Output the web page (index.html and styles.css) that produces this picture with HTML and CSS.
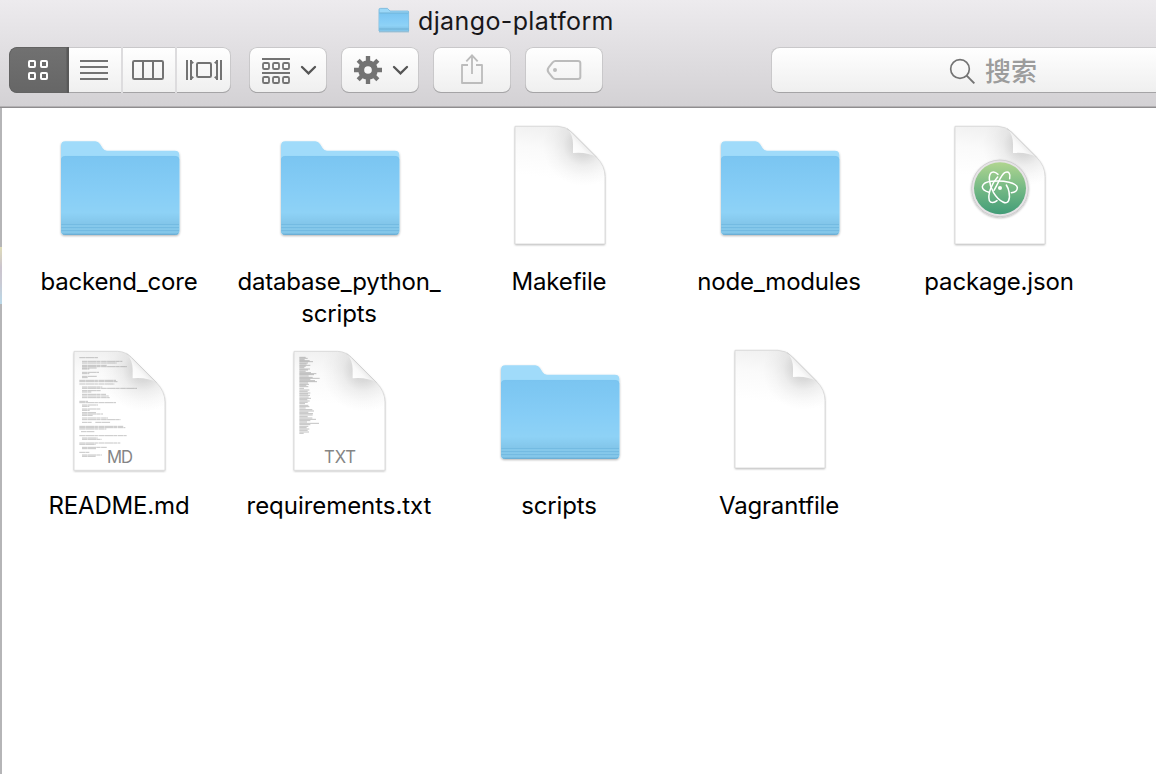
FILE: index.html
```html
<!DOCTYPE html>
<html lang="zh-CN">
<head>
<meta charset="utf-8">
<title>django-platform</title>
<link rel="stylesheet" href="styles.css">
</head>
<body>
<svg class="defs" width="0" height="0" aria-hidden="true">
  <defs>
    <linearGradient id="front" x1="0" y1="0" x2="0" y2="1">
      <stop offset="0" stop-color="#7ac5f1"/><stop offset=".45" stop-color="#86cdf6"/><stop offset=".72" stop-color="#8ed2f6"/><stop offset=".87" stop-color="#82c5e9"/><stop offset="1" stop-color="#7fc2e6"/>
    </linearGradient>
    <linearGradient id="paper" gradientUnits="userSpaceOnUse" x1="170" y1="35" x2="150" y2="190">
      <stop offset="0" stop-color="#f0f0f0"/><stop offset=".45" stop-color="#fafafa"/><stop offset="1" stop-color="#fff"/>
    </linearGradient>
    <radialGradient id="shade" gradientUnits="userSpaceOnUse" cx="250" cy="92" r="122">
      <stop offset="0" stop-color="#000" stop-opacity=".16"/><stop offset=".25" stop-color="#000" stop-opacity=".13"/><stop offset=".5" stop-color="#000" stop-opacity=".055"/><stop offset=".75" stop-color="#000" stop-opacity=".02"/><stop offset="1" stop-color="#000" stop-opacity="0"/>
    </radialGradient>
    <linearGradient id="curl" gradientUnits="userSpaceOnUse" x1="218" y1="114" x2="252" y2="82">
      <stop offset="0" stop-color="#fff"/><stop offset=".6" stop-color="#f9f9f9"/><stop offset="1" stop-color="#e8e8e8"/>
    </linearGradient>
    <linearGradient id="atom" x1="0" y1="0" x2="0" y2="1">
      <stop offset="0" stop-color="#b0d590"/><stop offset=".5" stop-color="#75b985"/><stop offset="1" stop-color="#429c78"/>
    </linearGradient>
    <filter id="drop" x="-10%" y="-10%" width="120%" height="125%"><feDropShadow dx="0" dy="3" stdDeviation="3" flood-color="#000" flood-opacity=".3"/></filter>
    <symbol id="folder" viewBox="78 3 384 384">
      <g filter="url(#drop)">
        <path fill="#a0dbfa" d="M93 77Q93 64 106 64H196Q205 64 210 72L218 85Q222 92 231 92H435Q448 92 448 105V333Q448 344 437 344H104Q93 344 93 333Z"/>
        <path fill="url(#front)" d="M93 120Q93 108 106 108H435Q448 108 448 120V333Q448 344 437 344H104Q93 344 93 333Z"/>
      </g>
      <path fill="none" stroke="#6bb4dd" stroke-width="2" d="M94 314H447M94 323H447M94 332H447"/>
      <path fill="none" stroke="#92d1f2" stroke-width="2" d="M94 318H447M94 327H447M94 336H447"/>
      <path fill="none" stroke="#5fa5cc" stroke-width="2.500" d="M98 342Q101 343 104 343H437Q441 343 444 341"/>
      <path fill="none" stroke="#78c1eb" stroke-width="1" d="M94 120Q94 109 106 109H435Q447 109 447 120"/>
    </symbol>
    <symbol id="sheet" viewBox="-12 18 384 384">
      <path fill="url(#paper)" filter="url(#drop)" d="M45 34H174Q197 34 215 52L290 127Q315 153 315 184V387H45Z"/>
      <path fill="url(#shade)" d="M45 34H174Q197 34 215 52L290 127Q315 153 315 184V387H45Z"/>
      <path fill="none" stroke="#d6d6d6" stroke-width="2.500" d="M45 34H174Q197 34 215 52L290 127Q315 153 315 184V387H45Z"/>
      <path fill="url(#curl)" d="M201 40Q219 60 219 87V114Q262 110 290 127L215 52Q208 44 201 40Z"/>
      <path fill="none" stroke="#c6c6c6" stroke-width="2" d="M201 40L215 52L290 127"/>
    </symbol>
  </defs>
</svg>

<header class="chrome">
  <div class="title">
    <svg class="title-icon" viewBox="0 0 34 28">
      <path fill="#6ba9c9" opacity=".5" d="M2 24h30v2.500H2z"/>
      <path fill="#9bd8f8" stroke="#71b5da" stroke-width=".8" d="M2 3.500Q2 2.400 3.200 2.400H10.500L13 5H31Q31.600 5 31.600 6V25H2Z"/>
      <path fill="url(#front)" d="M2.300 7H31.300V24.600H2.300Z"/>
      <path stroke="#70b3d7" stroke-width="1" d="M2.300 7H31.300M2 23H32"/>
    </svg>
    <h1 class="title-text">django-platform</h1>
  </div>
  <div class="toolbar">
    <div class="views">
      <button class="view view-on" aria-label="Icons"><svg viewBox="27 33 180 138" fill="none" stroke="#fff" stroke-width="6"><rect x="87" y="75" width="18" height="18" rx="3"/><rect x="123" y="75" width="18" height="18" rx="3"/><rect x="87" y="111" width="18" height="18" rx="3"/><rect x="123" y="111" width="18" height="18" rx="3"/></svg></button>
      <button class="view" aria-label="List"><svg viewBox="207 33 162 138" stroke="#737373" stroke-width="6"><path d="M240 75H324M240 93H324M240 111H324M240 129H324"/></svg></button>
      <button class="view" aria-label="Columns"><svg viewBox="369 33 162 138" fill="none" stroke="#737373" stroke-width="6"><rect x="399" y="75" width="90" height="54" rx="4"/><path d="M429 74V130M459 74V130"/></svg></button>
      <button class="view" aria-label="Gallery"><svg viewBox="531 33 162 138" fill="none" stroke="#737373" stroke-width="6"><path d="M561 72V132M663 72V132M573 72V132M651 72V132"/><path fill="#737373" stroke="none" d="M574 73L582 80L576 84ZM574 131L582 124L576 120ZM650 73L642 80L648 84ZM650 131L642 124L648 120Z"/><rect x="591" y="81" width="42" height="42" rx="4"/></svg></button>
    </div>
    <button class="tool" aria-label="Arrange"><svg viewBox="27 33 234 138" fill="none" stroke="#737373" stroke-width="5.500"><path d="M66 69H150M66 111H150"/><rect x="69" y="81" width="18" height="18" rx="4"/><rect x="99" y="81" width="18" height="18" rx="4"/><rect x="129" y="81" width="18" height="18" rx="4"/><rect x="69" y="123" width="18" height="18" rx="4"/><rect x="99" y="123" width="18" height="18" rx="4"/><rect x="129" y="123" width="18" height="18" rx="4"/><path stroke="#555" stroke-width="7" stroke-linecap="round" d="M186 93L205.500 112L225 93"/></svg></button>
    <button class="tool" aria-label="Actions"><svg viewBox="303 33 234 138" fill="none" stroke="#737373"><circle cx="384" cy="102" r="20.500" stroke-width="18"/><path stroke-width="13" d="M384 60V80M384 124V144M342 102H362M406 102H426M354.500 72.500L368 86M400 118L413.500 131.500M413.500 72.500L400 86M368 118L354.500 131.500"/><path stroke="#555" stroke-width="7" stroke-linecap="round" d="M462 93L481.500 112L501 93"/></svg></button>
    <button class="tool" aria-label="Share"><svg viewBox="24 33 234 138" fill="none" stroke="#bcbcbc" stroke-width="5.500"><path stroke-linejoin="round" d="M129 87H111V141H171V87H153"/><path d="M141 58V114M124 76L141 58L158 76"/></svg></button>
    <button class="tool" aria-label="Tags"><svg viewBox="300 33 234 138" fill="none" stroke="#bcbcbc" stroke-width="6"><path stroke-linejoin="round" d="M391 75H459Q466 75 466 81V123Q466 129 459 129H391Q387 129 383 125L371 110Q365 102 371 94L383 79Q387 75 391 75Z"/><circle cx="390" cy="102" r="6" fill="#bcbcbc" stroke="none"/></svg></button>
    <div class="search">
      <svg class="search-icon" viewBox="567 66 81 81" fill="none" stroke="#737373" stroke-width="5"><circle cx="600" cy="99" r="28"/><path stroke-width="6" d="M620 119L643 142"/></svg>
      <span class="search-text">搜索</span>
    </div>
  </div>
</header>

<main class="files">
  <div class="file"><svg class="icon"><use href="#folder"/></svg><span class="name">backend_core</span></div>
  <div class="file"><svg class="icon"><use href="#folder"/></svg><span class="name">database_python_<br>scripts</span></div>
  <div class="file"><svg class="icon"><use href="#sheet"/></svg><span class="name">Makefile</span></div>
  <div class="file"><svg class="icon"><use href="#folder"/></svg><span class="name">node_modules</span></div>
  <div class="file">
    <svg class="icon" viewBox="-12 18 384 384">
      <use href="#sheet" x="-12" y="18" width="384" height="384"/>
      <circle cx="180" cy="220" r="85" fill="#e6e3e6" stroke="#c4c2c4" stroke-width="2" filter="url(#drop)"/>
      <circle cx="180" cy="220" r="78" fill="url(#atom)"/>
      <g fill="none" stroke="#fff" stroke-width="4.500" stroke-linecap="round">
        <path d="M147 232C117 222 122 203 155 199C193 195 230 204 232 218C232 228 223 232 214 233"/>
        <path d="M174 178C160 165 147 171 148 193C150 220 166 249 189 261C206 270 211 251 207 231Q205 219 199 210"/>
        <path d="M162 226C178 200 181 182 194 173C207 167 212 177 209 191"/>
        <path d="M173 186C153 207 143 239 148 257C153 266 163 263 171 257"/>
      </g>
      <circle cx="180" cy="219" r="6" fill="#fff"/>
    </svg>
    <span class="name">package.json</span>
  </div>
  <div class="file">
    <svg class="icon" viewBox="-12 15 384 384">
      <use href="#sheet" x="-16.500" y="18" width="390" height="388"/>
      <g fill="none" stroke="#777" stroke-width="1.800" opacity=".7">
        <path stroke-dasharray="17 1 26 .8 11 1.500" d="M58 53H114M66 64H187M66 69H170M66 76H140M66 80H201M66 84H110M66 87H88M66 97H117M66 101H88M66 109H111M66 113H84M58 121H168M58 125H174M58 132H163M66 141H127M66 145H231M66 152H122M66 156H94M66 163H138M66 168H146M66 173H149M58 184H84M58 188H168M66 195H114M66 199H88M66 207H121M66 211H89M66 218H108M66 222H129M66 226H98M66 234H144M66 239H182M66 247H95M106 247H151M58 259H190M58 263H196M58 267H139M63 275H103M58 287H200M66 294H113M66 298H125M58 309H181M58 313H107M66 322H141M66 326H108M58 337H88M66 345H126M66 349H107"/>
      </g>
      <text class="kind" x="180" y="369" text-anchor="middle" textLength="78">MD</text>
    </svg>
    <span class="name">README.md</span>
  </div>
  <div class="file">
    <svg class="icon" viewBox="-12 15 384 384">
      <use href="#sheet" x="-16.500" y="18" width="390" height="388"/>
      <g fill="none" stroke="#777" stroke-width="1.800" opacity=".75">
        <path d="M58 52H77M58 55H83M58 59H74M58 62H89M58 65H99M58 69H84M58 72H80M58 76H91M58 79H77M58 83H73M58 87H90M58 90H84M58 94H77M58 98H93M58 101H109M58 104H102M58 108H86M58 112H98M58 115H119M58 118H91M58 122H105M58 125H111M58 129H84M58 133H87M58 136H79M58 140H85M58 145H72M58 150H88M58 154H83M58 159H91M58 162H84M58 166H90M58 171H86M58 175H93M58 179H82M58 183H89M58 187H83M58 191H75M58 196H85M58 200H88M58 204H77M58 209H97M58 213H102M58 217H85M58 221H99M58 225H98M58 230H83M58 234H97M58 238H108M58 242H91M58 246H81M58 250H117M58 254H91M58 259H85M58 263H80M58 267H88M58 271H83M58 276H87M58 280H71"/>
      </g>
      <text class="kind" x="180" y="369" text-anchor="middle" textLength="96">TXT</text>
    </svg>
    <span class="name name-wide">requirements.txt</span>
  </div>
  <div class="file"><svg class="icon"><use href="#folder"/></svg><span class="name">scripts</span></div>
  <div class="file"><svg class="icon"><use href="#sheet"/></svg><span class="name">Vagrantfile</span></div>
</main>
</body>
</html>
```
FILE: styles.css
```css
* { box-sizing: border-box; }
html, body { height: 100%; }
body {
  margin: 0;
  display: flex;
  flex-direction: column;
  overflow: hidden;
  background: #fff;
  font-family: Inter, "Noto Sans CJK SC", sans-serif;
  font-variant-ligatures: none;
  color: #000;
}
.defs { position: absolute; }
.chrome {
  flex: none;
  height: 108px;
  background: linear-gradient(#edebee, #d3d1d4);
  border-bottom: 1px solid #8f8d8f;
  box-shadow: inset 0 -1px #b3b1b3;
}
.title { display: flex; align-items: center; height: 42px; padding-left: 377px; }
.title-icon { width: 34px; height: 28px; margin-top: -2px; }
.title-text { margin: 0 0 0 7px; font-size: 25px; line-height: 32px; font-weight: 400; color: #18171a; white-space: nowrap; letter-spacing: .38px; }
.toolbar { display: flex; padding: 5px 0 0 9px; gap: 14px; }
button { border: 0; padding: 0; margin: 0; display: block; font: inherit; }
button svg { display: block; width: 100%; height: 46px; }
.views, .tool, .search {
  flex: none;
  height: 46px;
  border-radius: 8px;
  background: linear-gradient(#fff, #efefef);
  box-shadow: inset 0 -1px #a5a4a6, inset 0 0 0 1px #c9c8ca;
}
.views { display: flex; width: 222px; margin-right: 4px; overflow: hidden; }
.view { width: 54px; background: none; border-right: 2px solid #dddcde; }
.view svg { width: 54px; }
.view:last-child { border: 0; }
.view-on { width: 60px; background: linear-gradient(#717171, #666); border-right: 2px solid #595959; box-shadow: inset 0 0 0 1px #636363; border-radius: 8px 0 0 8px; }
.view-on svg { width: 60px; }
.tool { width: 78px; }
.search {
  flex: 1;
  min-width: 0;
  margin-left: 154px;
  display: flex;
  align-items: center;
  padding-left: 178px;
  border-radius: 8px 0 0 8px;
  box-shadow: inset 0 -1px #a5a4a6, inset 1px 1px #c9c8ca;
}
.search-icon { width: 27px; height: 27px; margin-top: 3px; }
.search-text { margin-left: 9px; font-family: "Noto Sans CJK SC", sans-serif; font-size: 26px; line-height: 46px; font-weight: 500; color: #9c9c9c; }
.files {
  flex: 1;
  display: grid;
  grid-template-columns: repeat(5, 220px);
  grid-auto-rows: 224px;
  align-content: start;
  padding: 13px 0 0 8px;
  border-left: 2px solid;
  border-image: linear-gradient(#b5b5b7 140px, #dedbb9 140px, #cbc4ce 160px, #c9c9d3 175px, #bad8e8 196px, #b5b5b7 196px) 1;
}
.file { display: flex; flex-direction: column; align-items: center; }
.icon { flex: none; width: 128px; height: 128px; }
.name { margin-top: 17px; margin-left: -2px; font-size: 24px; line-height: 32px; font-weight: 400; text-align: center; white-space: nowrap; letter-spacing: -.18px; }
.name-wide { letter-spacing: -.05px; }
.kind { font-family: Inter, sans-serif; font-size: 50px; fill: #858585; }
```
